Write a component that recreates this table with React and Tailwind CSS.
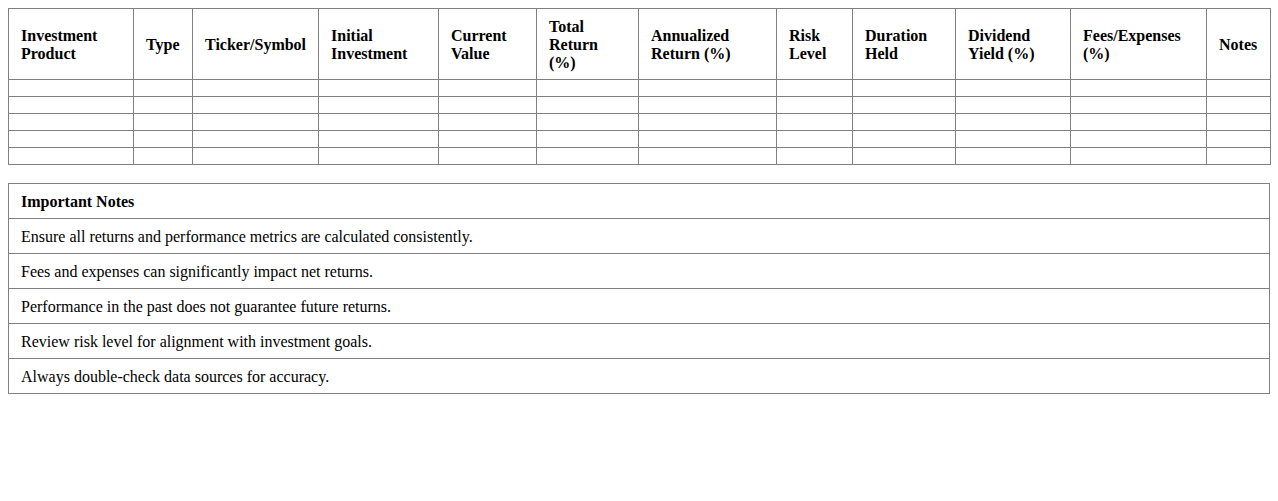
import React from "react";

const headers = [
  ["Investment Product", 125],
  ["Type", 59],
  ["Ticker/Symbol", 126],
  ["Initial Investment", 120],
  ["Current Value", 98],
  ["Total Return (%)", 102],
  ["Annualized Return (%)", 138],
  ["Risk Level", 76],
  ["Duration Held", 103],
  ["Dividend Yield (%)", 115],
  ["Fees/Expenses (%)", 136],
  ["Notes", 64],
];

const notes = [
  "Ensure all returns and performance metrics are calculated consistently.",
  "Fees and expenses can significantly impact net returns.",
  "Performance in the past does not guarantee future returns.",
  "Review risk level for alignment with investment goals.",
  "Always double-check data sources for accuracy.",
];

export default function App() {
  return (
    <div className="bg-white p-2 font-['Liberation_Serif',serif] text-black text-base">
      <table className="w-full table-fixed border-collapse border border-[#808080]">
        <colgroup>
          {headers.map(([h, w]) => (
            <col key={h} style={{ width: w }} />
          ))}
        </colgroup>
        <thead>
          <tr>
            {headers.map(([h]) => (
              <th
                key={h}
                className="border border-[#808080] px-3 pt-[9px] pb-[7px] text-left align-middle font-bold leading-[18px]"
              >
                {h}
              </th>
            ))}
          </tr>
        </thead>
        <tbody>
          {[0, 1, 2, 3, 4].map((r) => (
            <tr key={r}>
              {headers.map(([h]) => (
                <td key={h} className="border border-[#808080] px-3 py-2 leading-[18px]"></td>
              ))}
            </tr>
          ))}
        </tbody>
      </table>

      <table className="mt-[18px] w-full border-collapse border border-[#808080]">
        <thead>
          <tr>
            <th className="border border-[#808080] px-3 pt-[9px] pb-[7px] text-left font-bold leading-[18px]">
              Important Notes
            </th>
          </tr>
        </thead>
        <tbody>
          {notes.map((n) => (
            <tr key={n}>
              <td className="border border-[#808080] px-3 pt-[9px] pb-[7px] leading-[18px]">{n}</td>
            </tr>
          ))}
        </tbody>
      </table>
    </div>
  );
}
